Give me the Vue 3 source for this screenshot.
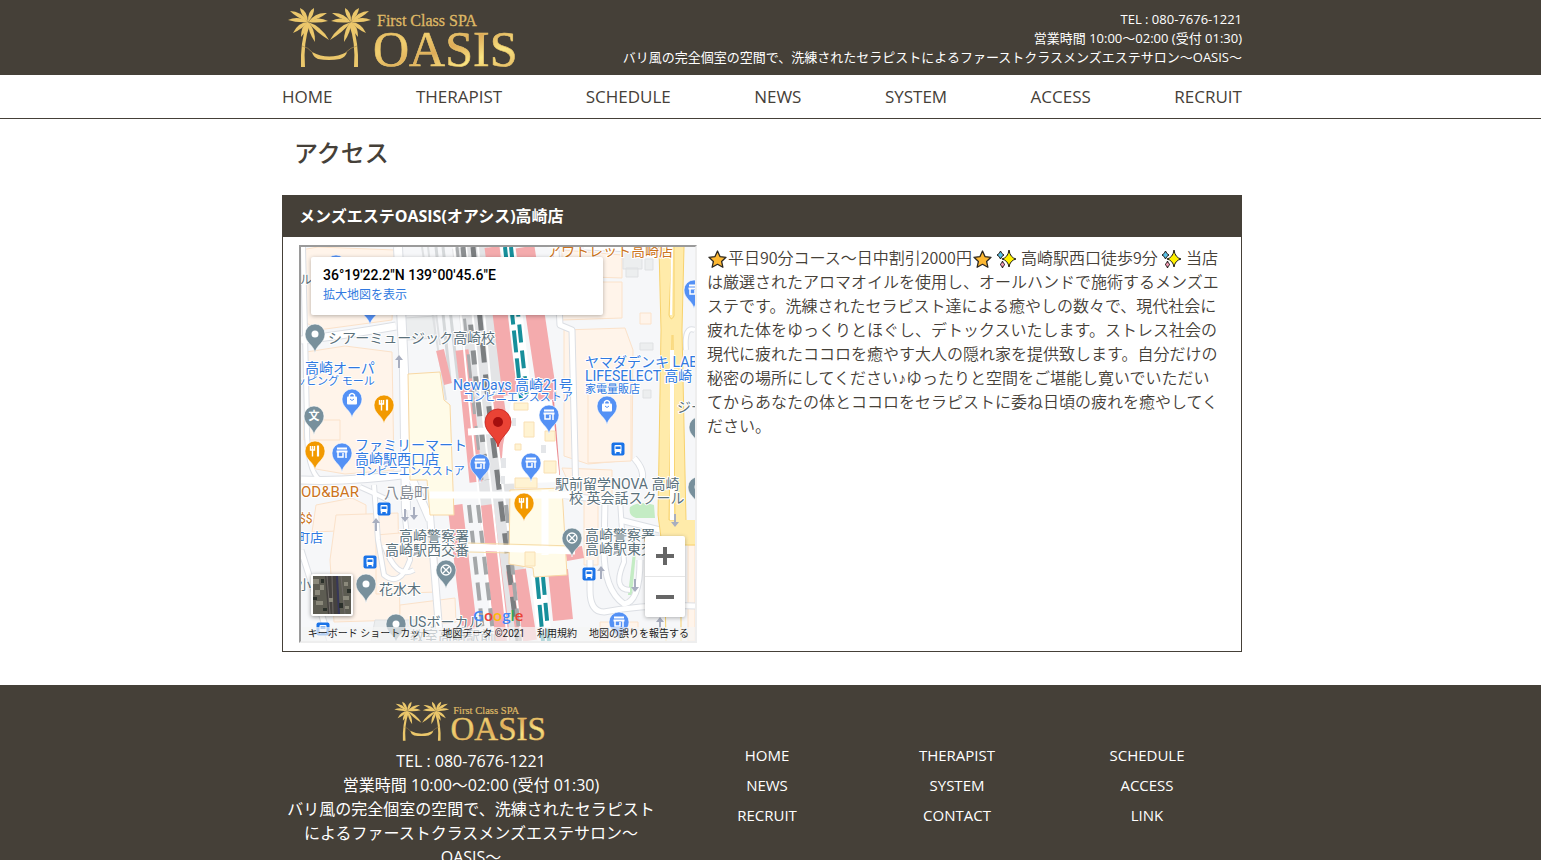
<template>
  <div class="page">
    <!-- Shared symbols -->
    <svg class="symbols" width="0" height="0" aria-hidden="true">
      <defs>
        <linearGradient id="gold" x1="0" y1="0" x2="1" y2="1">
          <stop offset="0" stop-color="#e0ae55" />
          <stop offset="0.3" stop-color="#f0cf70" />
          <stop offset="0.5" stop-color="#dfab58" />
          <stop offset="0.7" stop-color="#f9e583" />
          <stop offset="1" stop-color="#dca654" />
        </linearGradient>
        <symbol id="logo" viewBox="0 0 232 62">
          <g fill="#ebc76b">
            <path v-for="(d, i) in fronds" :key="`left-${i}`" :d="d" />
            <path d="M19 15 Q12 36 13 60 L17 60 Q15 36 22 17 Z" />
            <g transform="translate(83 0) scale(-1 1)">
              <path v-for="(d, i) in fronds" :key="`right-${i}`" :d="d" />
              <path d="M19 15 Q12 36 13 60 L17 60 Q15 36 22 17 Z" />
            </g>
            <path d="M24 45 Q41 54 59 45 Q58 50 52 52 Q41 54 30 52 Q25 50 24 45 Z" />
          </g>
          <path d="M14 39 Q20 40 25 46 M69 39 Q63 40 57 46" fill="none" stroke="#a98b4d" stroke-width="0.7" />
          <text x="89" y="19" class="logo-sub" fill="#dfb865">First Class SPA</text>
          <text x="85" y="59" class="logo-name" fill="url(#gold)">OASIS</text>
        </symbol>
        <symbol id="star" viewBox="0 0 21 20">
          <path
            d="M10.500 2 L13 7.600 L19 8.300 L14.600 12.400 L15.900 18.300 L10.500 15.300 L5.100 18.300 L6.400 12.400 L2 8.300 L8 7.600 Z"
            fill="#fdb833" stroke="#2b2721" stroke-width="1.3" stroke-linejoin="round"
          />
        </symbol>
        <symbol id="sparkle" viewBox="0 0 21 20">
          <g stroke="#1f1c18" stroke-linejoin="round">
            <path d="M4.500 2 Q5.500 5 8 6 Q5.500 7 4.500 10 Q3.500 7 1 6 Q3.500 5 4.500 2 Z" fill="#59c3ea" />
            <path d="M6.500 12 Q7 14.500 9 15.500 Q7 16.500 6.500 19 Q6 16.500 4 15.500 Q6 14.500 6.500 12 Z" fill="#f49ab4" />
            <path d="M13 1 Q14 8.500 20 10 Q14 11.500 13 18 Q12 11.500 6 10 Q12 8.500 13 1 Z" fill="#fff100" />
          </g>
        </symbol>
      </defs>
    </svg>

    <header class="site-header">
      <div class="container header-inner">
        <a href="#" class="header-logo" aria-label="OASIS"><svg><use href="#logo" /></svg></a>
        <div class="header-info">
          <p>{{ tel }}</p>
          <p>{{ hours }}</p>
          <p>{{ catchcopy }}</p>
        </div>
      </div>
    </header>

    <nav class="global-nav">
      <ul class="container nav-list">
        <li v-for="item in navItems" :key="item"><a href="#">{{ item }}</a></li>
      </ul>
    </nav>

    <main class="main">
      <div class="container">
        <h1 class="page-title">アクセス</h1>
        <section class="panel">
          <h2 class="panel-title">メンズエステOASIS(オアシス)高崎店</h2>
          <div class="panel-body">
            <div class="map">
              <svg class="map-canvas" viewBox="301 247 394 394" preserveAspectRatio="xMidYMid slice">
                <rect x="301" y="247" width="394" height="394" fill="#f6f7f9" />

                <!-- Buildings -->
                <g class="building">
                  <path v-for="(d, i) in buildings" :key="`b-${i}`" :d="d" />
                </g>
                <g fill="#eceeef" stroke="#dfe1e3">
                  <path d="M623 250 h19 v19 h-19 z M645 259 h8 v11 h-8 z M626 268 h12 v9 h-12 z M640 343 h13 v7 h-13 z M405 318 l30 -2 v22 l-28 2 z M643 390 h8 v8 h-8 z M375 620 h50 v21 h-54 z" />
                </g>

                <!-- Green -->
                <path d="M630 507 Q640 500 654 505 L655 518 H636 Q628 516 630 507 Z M633 552 L636 552 L632 595 H628 Z" fill="#c4ecc4" />

                <!-- Streets -->
                <g fill="none" stroke-linejoin="round">
                  <path v-for="(r, i) in roads" :key="`re-${i}`" :d="r.d" stroke="#dcdfe4" :stroke-width="r.w + 2" />
                  <path v-for="(r, i) in roads" :key="`rf-${i}`" :d="r.d" stroke="#ffffff" :stroke-width="r.w" />
                </g>

                <!-- Railway -->
                <g fill="none">
                  <path v-for="(t, i) in tracks" :key="`t-${i}`" :d="t.d" :stroke="t.color" :stroke-width="t.w" :stroke-dasharray="t.dash" />
                </g>

                <!-- Station -->
                <g fill="#fffbe8" stroke="#f8d8a4">
                  <path d="M408 374 L440 372 L444 400 L450 405 L454 515 L430 515 L427 480 L410 480 Z" />
                  <path d="M510 490 L562 488 L567 575 L534 577 L533 568 L509 564 Z" />
                </g>
                <path d="M511 402 L552 400 L560 482 L500 484 L503 445 Z" fill="#ffffff" />
                <path d="M468 432 L500 430 M430 495 H572 M468 547 L575 551 M545 555 V490" stroke="#ffffff" stroke-width="7" fill="none" />
                <g fill="#fff3d2" stroke="#f9e0b4">
                  <path d="M524 422 h10 v15 h-10 z M545 431 h10 v10 h-10 z M515 478 h22 v10 h-22 z M514 403 h14 v7 h-14 z M525 552 h10 v14 h-10 z M544 461 h12 v12 h-12 z M515 444 h6 v6 h-6 z" />
                </g>
                <path d="M501 458 h5 v10 h-5 z M541 445 h5 v8 h-5 z M512 418 h4 v8 h-4 z M501 476 h4 v8 h-4 z" fill="#e4e6e9" />
                <path d="M468 543 L575 546 M468 552 L510 553" stroke="#f6dca8" fill="none" />

                <!-- Main road -->
                <path d="M659 247 H684 L682 330 L686 520 H695 V545 H662 L658 515 L661 330 Z" fill="#ffebaa" />
                <path d="M659 247 L661 330 L658 515 L662 545 H695 M684 247 L682 330 L686 520 M672 247 L669 315 Q671 322 674 316 L674 247 M672 335 L669 520 L675 520 L673 335 M664 545 L666 641 M681 545 V641" fill="none" stroke="#f7d26e" />
                <path d="M672 250 L671 315" stroke="#ffffff" stroke-width="2" />
                <path d="M672 350 L672 520" stroke="#ffffff" stroke-width="4" />
                <g fill="#a8aebf">
                  <path v-for="(a, i) in arrows" :key="`a-${i}`" d="M-1 6 V-2 H-4 L0 -7 L4 -2 H1 V6 Z" :transform="`translate(${a[0]} ${a[1]}) rotate(${a[2]})`" />
                </g>

                <!-- Transit stops -->
                <g v-for="(s, i) in stops" :key="`s-${i}`" :transform="`translate(${s[0]} ${s[1]})`">
                  <rect x="-6.500" y="-6.500" width="13" height="13" rx="2" fill="#1a73e8" />
                  <rect x="-3.500" y="-4" width="7" height="7" rx="1" fill="#ffffff" />
                  <rect x="-2.500" y="-2.500" width="5" height="2.500" fill="#1a73e8" />
                  <path d="M-2.500 3 v1.500 M2.500 3 v1.500" stroke="#ffffff" stroke-width="1.500" />
                </g>

                <!-- Pins -->
                <g v-for="(p, i) in pins" :key="`p-${i}`" :transform="`translate(${p.x} ${p.y})`">
                  <path d="M0 19 C-1 11 -10 9 -10 0 A10 10 0 0 1 10 0 C10 9 1 11 0 19 Z" :fill="pinColors[p.type]" stroke="#ffffff" stroke-width="0.6" />
                  <g v-if="p.type === 'shop'">
                    <path d="M-5 -4.500 H5 M-5.500 -1.500 H5.500" stroke="#ffffff" stroke-width="1.800" />
                    <path d="M-4 -1 V4 H1 V0 M4 -1 V5" fill="none" stroke="#ffffff" stroke-width="1.500" />
                  </g>
                  <g v-else-if="p.type === 'bag'">
                    <rect x="-5" y="-2.500" width="10" height="8" rx="1" fill="#ffffff" />
                    <path d="M-2.500 -2 V-4 Q0 -7 2.500 -4 V-2" fill="none" stroke="#ffffff" stroke-width="1.400" />
                    <path d="M-2 0 Q0 3 2 0" fill="none" stroke="#5491f5" />
                  </g>
                  <g v-else-if="p.type === 'food'" fill="none" stroke="#ffffff">
                    <path d="M-4.500 -5 V-1 H-0.500 V-5 M-2.500 -5 V5.500" stroke-width="1.400" />
                    <path d="M3 -5.500 V5.500" stroke-width="2.200" />
                  </g>
                  <text v-else-if="p.type === 'school'" y="4" class="map-text" font-size="11" font-weight="700" text-anchor="middle" fill="#ffffff">文</text>
                  <g v-else-if="p.type === 'police'" fill="none" stroke="#ffffff" stroke-width="1.300">
                    <circle r="5" />
                    <path d="M-3 -3 L3 3 M3 -3 L-3 3" />
                  </g>
                  <circle v-else r="3.500" fill="#ffffff" />
                </g>

                <!-- Labels -->
                <g class="map-text map-labels">
                  <text v-for="(l, i) in labels" :key="`l-${i}`" :x="l.x" :y="l.y" :font-size="l.size || 14" :fill="l.color">{{ l.text }}</text>
                </g>

                <!-- Marker -->
                <path d="M498 447 C496 436 485 433 485 422 A13 13 0 0 1 511 422 C511 433 500 436 498 447 Z" fill="#ea4335" stroke="#c5221f" stroke-width="0.8" />
                <circle cx="498" cy="422" r="5" fill="#a50e0e" />

                <text x="473" y="621" class="google"><tspan v-for="(c, i) in google" :key="`g-${i}`" :fill="c[1]">{{ c[0] }}</tspan></text>
              </svg>

              <div class="map-card">
                <strong>36°19'22.2"N 139°00'45.6"E</strong>
                <a href="#">拡大地図を表示</a>
              </div>

              <button type="button" class="map-thumb" aria-label="航空写真">
                <svg viewBox="0 0 38 38">
                  <rect width="38" height="38" fill="#5d5c52" />
                  <path d="M12 0 L15 38 H27 L24 0 Z" fill="#45423f" />
                  <path d="M14 0 L17 38 M19 0 L20 38 M28 0 L32 38" stroke="#706b68" stroke-width="1" />
                  <path d="M24 0 L26 38" stroke="#37375a" stroke-width="2" />
                  <path d="M0 3 h6 v5 h-6 z M7 9 h4 v5 h-4 z M2 14 h5 v5 h-5 z M16 22 h4 v4 h-4 z M3 25 h7 v4 h-7 z M31 6 h4 v4 h-4 z M30 20 h6 v4 h-6 z M32 30 h4 v3 h-4 z" fill="#8b897b" />
                  <path d="M0 21 h4 v3 h-4 z M8 3 h3 v4 h-3 z M10 32 h4 v3 h-4 z M34 13 h4 v4 h-4 z M26 27 h4 v5 h-4 z" fill="#2b302a" />
                </svg>
              </button>

              <div class="map-zoom">
                <button type="button" aria-label="拡大">
                  <svg viewBox="0 0 18 18"><path d="M0 9 H18 M9 0 V18" stroke="#666666" stroke-width="4" /></svg>
                </button>
                <button type="button" aria-label="縮小">
                  <svg viewBox="0 0 18 18"><path d="M0 9 H18" stroke="#666666" stroke-width="4" /></svg>
                </button>
              </div>

              <div class="map-footer">
                <a href="#">キーボード ショートカット</a>
                <span>地図データ ©2021</span>
                <a href="#">利用規約</a>
                <a href="#">地図の誤りを報告する</a>
              </div>
            </div>

            <p class="description">
              <svg class="emoji"><use href="#star" /></svg>平日90分コース〜日中割引2000円<svg class="emoji"><use href="#star" /></svg>&#32;<svg class="emoji"><use href="#sparkle" /></svg> 高崎駅西口徒歩9分
              <svg class="emoji"><use href="#sparkle" /></svg> 当店は厳選されたアロマオイルを使用し、オールハンドで施術するメンズエステです。洗練されたセラピスト達による癒やしの数々で、現代社会に疲れた体をゆっくりとほぐし、デトックスいたします。ストレス社会の現代に疲れたココロを癒やす大人の隠れ家を提供致します。自分だけの秘密の場所にしてください<span class="note">♪</span>ゆったりと空間をご堪能し寛いでいただいてからあなたの体とココロをセラピストに委ね日頃の疲れを癒やしてください。
            </p>
          </div>
        </section>
      </div>
    </main>

    <footer class="site-footer">
      <div class="container footer-inner">
        <div class="footer-info">
          <a href="#" class="footer-logo" aria-label="OASIS"><svg><use href="#logo" /></svg></a>
          <p>{{ tel }}</p>
          <p>{{ hours }}</p>
          <p>{{ catchcopy }}</p>
        </div>
        <ul class="footer-links">
          <li v-for="item in footerItems" :key="item"><a href="#">{{ item }}</a></li>
        </ul>
      </div>
    </footer>
  </div>
</template>

<script setup>
const tel = 'TEL : 080-7676-1221';
const hours = '営業時間 10:00〜02:00 (受付 01:30)';
const catchcopy = 'バリ風の完全個室の空間で、洗練されたセラピストによるファーストクラスメンズエステサロン〜OASIS〜';

const navItems = ['HOME', 'THERAPIST', 'SCHEDULE', 'NEWS', 'SYSTEM', 'ACCESS', 'RECRUIT'];
const footerItems = ['HOME', 'THERAPIST', 'SCHEDULE', 'NEWS', 'SYSTEM', 'ACCESS', 'RECRUIT', 'CONTACT', 'LINK'];

// Palm leaves, from the crown out to each tip
const crown = [20, 15];
const leafTips = [
  [0, 13], [2, 4], [12, 1], [26, 1], [39, 6], [40, 14], [41, 33], [27, 35], [13, 30], [5, 26]
];
const fronds = leafTips.map(([x, y]) => {
  const [cx, cy] = crown;
  const mx = (cx + x) / 2;
  const my = (cy + y) / 2 - 2;
  const length = Math.hypot(x - cx, y - cy);
  const nx = ((y - cy) / length) * 4;
  const ny = ((cx - x) / length) * 4;
  return `M${cx} ${cy} Q${mx + nx} ${my + ny} ${x} ${y} Q${mx - nx} ${my - ny} ${cx} ${cy} Z`;
});

// Map data
const buildings = [
  'M301 250 L318 247 L395 250 L392 320 L318 330 L305 322 Z',
  'M306 352 L345 346 L392 352 L394 470 L345 474 L310 468 Z',
  'M304 420 h36 v20 h-36 z',
  'M316 505 L352 498 L366 505 L366 530 L312 532 Z',
  'M336 515 L398 513 L400 620 L334 622 L330 560 Z',
  'M376 535 L436 530 L438 592 L376 594 Z',
  'M400 605 L455 598 L456 622 L400 628 Z',
  'M562 250 L622 255 L622 278 L562 276 Z',
  'M562 282 L622 282 L622 318 L562 320 Z',
  'M564 330 L625 328 L633 350 L632 460 L588 464 L564 456 Z',
  'M588 386 L631 382 L631 461 L588 463 Z',
  'M562 468 L612 470 L612 500 L576 500 Z',
  'M584 500 h14 v65 h-14 z',
  'M640 313 h11 v11 h-11 z',
  'M688 545 h7 v96 h-7 z',
  'M600 622 h38 v19 h-38 z'
];

const roads = [
  { d: 'M301 340 Q345 335 396 326', w: 7 },
  { d: 'M398 247 L404 370 L406 510', w: 8 },
  { d: 'M301 480 Q350 482 410 474 L430 520', w: 7 },
  { d: 'M303 247 L307 420 Q306 470 320 480', w: 4 },
  { d: 'M374 485 L378 540 L384 575 Q400 588 410 560 L404 510', w: 4 },
  { d: 'M360 487 Q376 494 388 500 M384 545 Q396 580 414 570', w: 4 },
  { d: 'M556 250 L560 325 L572 330 L576 500', w: 5 },
  { d: 'M560 495 L605 500 L604 550 Q604 590 624 604 Q640 602 640 560', w: 5 },
  { d: 'M590 560 V590 Q590 612 604 612 Q650 604 695 606', w: 5 },
  { d: 'M620 500 L624 562 Q612 590 630 590', w: 4 },
  { d: 'M634 458 Q645 470 642 480', w: 5 },
  { d: 'M430 515 L440 641', w: 6 },
  { d: 'M301 550 L330 641', w: 5 },
  { d: 'M584 247 L660 250 M620 520 L660 530', w: 5 },
  { d: 'M695 330 Q684 325 686 350', w: 4 }
];

const tracks = [
  { d: 'M422 247 L446 400 M428 247 L440 345', color: '#dfe1e3', w: 2 },
  { d: 'M436 247 L450 380 M443 247 L458 380', color: '#d5d8da', w: 3 },
  { d: 'M470 247 L486 400 L514 641', color: '#e3e4e6', w: 36 },
  { d: 'M462 350 L468 400 L476 482', color: '#f4abad', w: 13 },
  { d: 'M440 350 L448 384', color: '#f4abad', w: 8 },
  { d: 'M492 247 L510 395', color: '#f4abad', w: 15 },
  { d: 'M525 247 L548 400', color: '#f4abad', w: 19 },
  { d: 'M497 395 L510 480', color: '#f4abad', w: 12 },
  { d: 'M455 505 L471 641', color: '#f4abad', w: 15 },
  { d: 'M486 505 L503 641', color: '#f4abad', w: 15 },
  { d: 'M516 570 L527 641', color: '#f4abad', w: 20 },
  { d: 'M558 570 L563 620', color: '#f4abad', w: 20 },
  { d: 'M566 555 L583 552', color: '#f4abad', w: 12 },
  { d: 'M553 400 L559 475', color: '#ec8b8f', w: 2 },
  { d: 'M454 247 L469 400 L494 641 M466 247 L481 400 L508 641 M478 247 L492 400 L522 641', color: '#ffffff', w: 2 },
  { d: 'M457 247 L473 400 L482 480', color: '#a9acae', w: 3, dash: '24 12' },
  { d: 'M463 247 L478 400 L487 480', color: '#8c8f91', w: 5, dash: '14 12' },
  { d: 'M473 247 L488 400 L518 641', color: '#7b7e80', w: 5, dash: '20 12' },
  { d: 'M469 505 L484 641 M478 505 L494 641 M506 505 L520 641', color: '#a4a7a9', w: 4, dash: '18 8' },
  { d: 'M508 247 L525 398 M538 575 L545 641', color: '#ffffff', w: 14 },
  { d: 'M505 247 L521 398 M537 577 L543 641', color: '#178f9b', w: 4, dash: '22 6' },
  { d: 'M511 247 L527 398 M543 577 L549 641', color: '#178f9b', w: 4, dash: '18 8' }
];

const arrows = [
  [399, 362, 0], [376, 525, 0], [405, 515, 180], [414, 513, 180],
  [601, 573, 0], [635, 585, 180], [675, 520, 180], [660, 624, 0]
];

const stops = [[618, 449], [384, 509], [370, 562], [589, 574], [323, 629]];

const pinColors = {
  shop: '#5491f5',
  bag: '#5491f5',
  food: '#f29900',
  school: '#78909c',
  police: '#78909c',
  dot: '#78909c'
};

const pins = [
  { x: 336, y: 265, type: 'shop' },
  { x: 370, y: 306, type: 'shop' },
  { x: 694, y: 290, type: 'shop' },
  { x: 315, y: 334, type: 'dot' },
  { x: 352, y: 399, type: 'bag' },
  { x: 384, y: 405, type: 'food' },
  { x: 314, y: 416, type: 'school' },
  { x: 315, y: 451, type: 'food' },
  { x: 342, y: 453, type: 'shop' },
  { x: 480, y: 464, type: 'shop' },
  { x: 549, y: 415, type: 'shop' },
  { x: 607, y: 406, type: 'bag' },
  { x: 531, y: 463, type: 'shop' },
  { x: 524, y: 503, type: 'food' },
  { x: 699, y: 427, type: 'dot' },
  { x: 698, y: 487, type: 'dot' },
  { x: 446, y: 570, type: 'police' },
  { x: 572, y: 538, type: 'police' },
  { x: 366, y: 584, type: 'dot' },
  { x: 396, y: 624, type: 'dot' },
  { x: 619, y: 622, type: 'shop' }
];

const blue = '#3079e0';
const slate = '#5b717b';
const orange = '#cc7420';
const labels = [
  { text: 'アウトレット高崎店', x: 547, y: 256, color: orange },
  { text: 'ル', x: 300, y: 284, size: 12, color: slate },
  { text: 'シアーミュージック高崎校', x: 328, y: 343, color: slate },
  { text: '高崎オーパ', x: 305, y: 373, color: blue },
  { text: 'ッピング モール', x: 295, y: 385, size: 11, color: blue },
  { text: 'NewDays 高崎21号', x: 453, y: 390, color: blue },
  { text: 'コンビニエンスストア', x: 463, y: 401, size: 11, color: blue },
  { text: 'ヤマダデンキ LABI', x: 585, y: 367, color: blue },
  { text: 'LIFESELECT 高崎', x: 585, y: 381, color: blue },
  { text: '家電量販店', x: 585, y: 393, size: 11, color: blue },
  { text: 'ジー', x: 677, y: 412, size: 14, color: slate },
  { text: 'ファミリーマート', x: 355, y: 450, color: blue },
  { text: '高崎駅西口店', x: 355, y: 464, color: blue },
  { text: 'コンビニエンスストア', x: 355, y: 475, size: 11, color: blue },
  { text: 'OD&BAR', x: 301, y: 497, size: 15, color: orange },
  { text: '八島町', x: 384, y: 498, size: 15, color: '#858b93' },
  { text: '$$', x: 299, y: 523, size: 12, color: orange },
  { text: '町店', x: 297, y: 542, size: 13, color: blue },
  { text: '高崎警察署', x: 399, y: 541, color: slate },
  { text: '高崎駅西交番', x: 385, y: 555, color: slate },
  { text: '駅前留学NOVA 高崎', x: 555, y: 489, color: slate },
  { text: '校 英会話スクール', x: 569, y: 503, color: slate },
  { text: '高崎警察署', x: 585, y: 540, color: slate },
  { text: '高崎駅東交番', x: 585, y: 554, color: slate },
  { text: '小', x: 298, y: 589, size: 13, color: slate },
  { text: '花水木', x: 379, y: 594, color: slate },
  { text: 'USボーカル', x: 409, y: 627, color: slate },
  { text: '教室高崎駅前', x: 410, y: 641, color: slate }
];

const google = [
  ['G', '#4285f4'], ['o', '#ea4335'], ['o', '#fbbc05'], ['g', '#4285f4'], ['l', '#34a853'], ['e', '#ea4335']
];
</script>

<style>
body {
  margin: 0;
  background: #ffffff;
}
</style>

<style scoped>
.page {
  font-family: "Open Sans", "Noto Sans CJK JP", sans-serif;
  font-size: 16px;
  line-height: 24px;
  color: #454038;
}

.page p,
.page h1,
.page h2,
.page ul {
  margin: 0;
  padding: 0;
}

.page ul {
  list-style: none;
}

.page a {
  text-decoration: none;
  color: inherit;
}

.symbols {
  position: absolute;
}

.container {
  max-width: 960px;
  margin: 0 auto;
}

.site-header,
.global-nav,
.main,
.site-footer {
  padding-right: 17px;
}

.logo-sub {
  font-family: "Liberation Serif", serif;
  font-size: 16px;
  stroke: #dfb865;
  stroke-width: 0.3px;
}

.logo-name {
  font-family: "Liberation Serif", serif;
  font-size: 50px;
  stroke: #ebc76b;
  stroke-width: 0.6px;
}

.site-header {
  background: #454038;
  color: #ffffff;
}

.header-inner {
  display: flex;
  justify-content: space-between;
  align-items: center;
  min-height: 75px;
}

.header-logo {
  padding-left: 6px;
}

.header-logo svg {
  display: block;
  width: 232px;
  height: 62px;
}

.header-info {
  padding-top: 2px;
  font-size: 13px;
  line-height: 19px;
  text-align: right;
}

.global-nav {
  border-bottom: 1px solid #454038;
}

.page .nav-list {
  display: flex;
  flex-wrap: wrap;
  justify-content: space-between;
  margin: 0 auto;
  padding: 10px 0 9px;
  font-size: 17px;
}

.main {
  padding-top: 16px;
  padding-bottom: 33px;
}

.page .page-title {
  padding-left: 12px;
  margin-bottom: 24px;
  font-size: 24px;
  line-height: 36px;
  font-weight: 500;
}

.panel {
  border: 1px solid #454038;
}

.page .panel-title {
  padding: 8px 16px 9px;
  background: #454038;
  color: #ffffff;
  font-size: 16px;
  font-weight: 700;
}

.panel-body {
  display: grid;
  grid-template-columns: 398px 1fr;
  gap: 10px;
  padding: 8px 16px;
}

.description {
  font-family: "Noto Sans CJK JP", sans-serif;
  font-weight: 350;
}

.emoji {
  width: 21px;
  height: 20px;
  vertical-align: -5px;
}

.note {
  font-family: "DejaVu Sans", sans-serif;
  line-height: 1;
}

.map {
  position: relative;
  box-sizing: border-box;
  aspect-ratio: 1;
  border: 2px inset #eeeeee;
  overflow: hidden;
  font-family: Roboto, "Noto Sans CJK JP", sans-serif;
}

.map-canvas {
  display: block;
  width: 100%;
  height: 100%;
}

.building {
  fill: #fff4ea;
  stroke: #fbe2ca;
}

.map-text {
  font-family: Roboto, "Noto Sans CJK JP", sans-serif;
}

.map-labels {
  stroke: #ffffff;
  stroke-width: 2px;
  stroke-linejoin: round;
  paint-order: stroke;
}

.google {
  font-family: "Open Sans", sans-serif;
  font-size: 15px;
  font-weight: 600;
}

.map-card {
  position: absolute;
  top: 10px;
  left: 10px;
  box-sizing: border-box;
  width: 292px;
  padding: 8px 12px 10px;
  background: #ffffff;
  border-radius: 2px;
  box-shadow: 0 1px 4px rgba(0, 0, 0, 0.3);
  font-size: 12px;
  line-height: 20px;
}

.map-card strong {
  display: block;
  color: #000000;
  font-size: 14px;
  font-weight: 500;
}

.page .map-card a {
  display: block;
  color: #3079e0;
}

.map-thumb {
  position: absolute;
  left: 10px;
  bottom: 25px;
  width: 42px;
  height: 42px;
  padding: 0;
  border: 2px solid #ffffff;
  border-radius: 2px;
  box-shadow: 0 1px 4px rgba(0, 0, 0, 0.4);
  background: #ffffff;
  cursor: pointer;
}

.map-thumb svg {
  display: block;
  width: 38px;
  height: 38px;
}

.map-zoom {
  position: absolute;
  right: 10px;
  bottom: 24px;
  width: 40px;
  background: #ffffff;
  border-radius: 2px;
  box-shadow: 0 1px 4px rgba(0, 0, 0, 0.3);
}

.map-zoom button {
  display: flex;
  align-items: center;
  justify-content: center;
  width: 100%;
  height: 40px;
  padding: 0;
  border: 0;
  background: none;
  cursor: pointer;
}

.map-zoom button + button {
  height: 41px;
  border-top: 1px solid #e6e6e6;
}

.map-zoom svg {
  width: 18px;
  height: 18px;
}

.map-footer {
  position: absolute;
  right: 0;
  bottom: 0;
  display: flex;
  gap: 12px;
  padding: 0 6px;
  background: rgba(245, 245, 245, 0.7);
  color: #222222;
  font-size: 10px;
  line-height: 14px;
  white-space: nowrap;
}

.site-footer {
  background: #454038;
  color: #ffffff;
}

.footer-inner {
  display: grid;
  grid-template-columns: 378px 1fr;
  gap: 12px;
  align-items: center;
  padding: 16px 0;
}

.footer-info {
  text-align: center;
}

.footer-logo svg {
  display: block;
  width: 154px;
  height: 41px;
  margin: 0 auto 7px;
}

.page .footer-links {
  display: grid;
  grid-template-columns: repeat(3, 1fr);
  row-gap: 6px;
  font-size: 15px;
  text-align: center;
}

@media (max-width: 900px) {
  .panel-body,
  .footer-inner {
    grid-template-columns: 1fr;
  }
}
</style>
